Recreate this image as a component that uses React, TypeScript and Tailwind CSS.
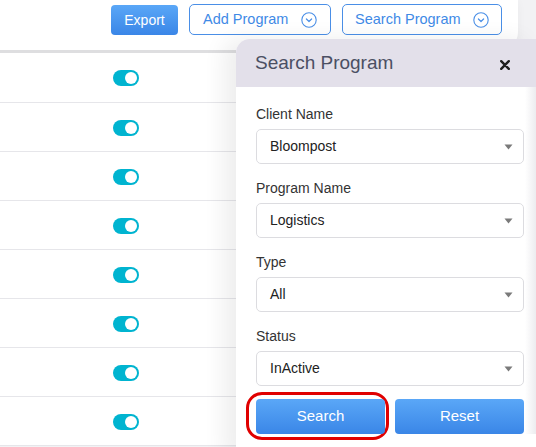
import React from "react";

function ChevronCircle() {
  return (
    <svg width="16" height="16" viewBox="0 0 16 16" fill="none">
      <circle cx="8" cy="8" r="7.2" stroke="#4a8fe7" strokeWidth="1.1" />
      <path d="M5.4 7l2.6 2.5L10.6 7" stroke="#4a8fe7" strokeWidth="1.2" strokeLinecap="round" strokeLinejoin="round" />
    </svg>
  );
}

function Toggle() {
  return (
    <div className="w-[26px] h-[16px] rounded-full bg-[#00b4d0] flex items-center justify-end pr-[2px]">
      <div className="w-[12px] h-[12px] rounded-full bg-white" />
    </div>
  );
}

function SelectBox({ value }: { value: string }) {
  return (
    <div className="h-[35px] border border-[#dcdce0] rounded-[5px] bg-white flex items-center justify-between pl-[13px] pr-[10px]">
      <span className="text-[14px] text-[#222]">{value}</span>
      <svg width="9" height="6" viewBox="0 0 9 6">
        <path d="M0.5 0.5h8L4.5 5.5z" fill="#7a7a7a" />
      </svg>
    </div>
  );
}

function Field({ label, value }: { label: string; value: string }) {
  return (
    <div className="mb-[14px]">
      <div className="text-[14px] leading-[20px] text-[#333] mb-[5px]">{label}</div>
      <SelectBox value={value} />
    </div>
  );
}

export default function App() {
  const rows = [0, 1, 2, 3, 4, 5, 6, 7];
  return (
    <div
      className="relative w-[536px] h-[447px] overflow-hidden bg-[#f2f2f4]"
      style={{ fontFamily: '"Liberation Sans", Arial, sans-serif' }}
    >
      {/* top bar */}
      <div className="h-[50px] w-[518px] bg-white rounded-br-[18px] flex items-start justify-end gap-[11px] pr-[16px] pt-[4px] shadow-[0_2px_10px_rgba(0,0,0,0.04)]">
        <button className="h-[30px] w-[67px] mt-[1px] rounded-[4px] bg-gradient-to-b from-[#5aa7f7] to-[#3a86e7] text-white text-[14px] font-medium">
          Export
        </button>
        <button className="h-[31px] w-[142px] rounded-[5px] border border-[#4a8fe7] bg-white flex items-center justify-between pl-[13px] pr-[13px] text-[14.5px] text-[#3f8ae6]">
          <span>Add Program</span>
          <ChevronCircle />
        </button>
        <button className="h-[31px] w-[160px] rounded-[5px] border border-[#4a8fe7] bg-white flex items-center justify-between pl-[12px] pr-[12px] text-[14.5px] text-[#3f8ae6]">
          <span>Search Program</span>
          <ChevronCircle />
        </button>
      </div>
      <div className="h-[3px] bg-[#dedee0]" />
      {/* table rows */}
      <div className="bg-white">
        {rows.map((r) => (
          <div
            key={r}
            className={`${r === 0 ? "h-[50px]" : "h-[49px]"} border-b border-[#e6e6ea] flex items-center pt-[1px] pl-[113px]`}
          >
            <Toggle />
          </div>
        ))}
      </div>

      {/* search panel */}
      <div className="absolute left-[236px] top-[39px] w-[300px] h-[420px] bg-white rounded-tl-[14px] shadow-[-12px_0_22px_rgba(0,0,0,0.07)] overflow-hidden">
        <div className="h-[48px] bg-[#e3e0ea] flex items-center justify-between pl-[19px] pr-[26px]">
          <span className="text-[19px] text-[#4b4f63]">Search Program</span>
          <svg width="10" height="10" viewBox="0 0 10 10" className="mt-[3px]">
            <path d="M1.2 1.2l7.6 7.6M8.8 1.2l-7.6 7.6" stroke="#1f1f1f" strokeWidth="2.4" strokeLinecap="round" />
          </svg>
        </div>
        <div className="relative pt-[17px] pl-[20px] pr-[12px]">
          <div className="absolute right-0 top-0 bottom-0 w-[11px] bg-gradient-to-r from-white to-[#ececef]" />
          <div className="relative">
            <Field label="Client Name" value="Bloompost" />
            <Field label="Program Name" value="Logistics" />
            <Field label="Type" value="All" />
            <Field label="Status" value="InActive" />
            <div className="flex gap-[10px] -mt-[1px]">
              <div className="relative w-[129px]">
                <div className="absolute -left-[10px] -right-[4px] -top-[7px] -bottom-[6px] border-[3px] border-[#e00000] rounded-[16px]" />
                <button className="relative w-full h-[35px] rounded-[4px] bg-gradient-to-b from-[#5aa7f7] to-[#3a86e7] text-white text-[15px]">
                  Search
                </button>
              </div>
              <button className="w-[129px] h-[35px] rounded-[4px] bg-gradient-to-b from-[#5aa7f7] to-[#3a86e7] text-white text-[15px]">
                Reset
              </button>
            </div>
          </div>
        </div>
      </div>
    </div>
  );
}
